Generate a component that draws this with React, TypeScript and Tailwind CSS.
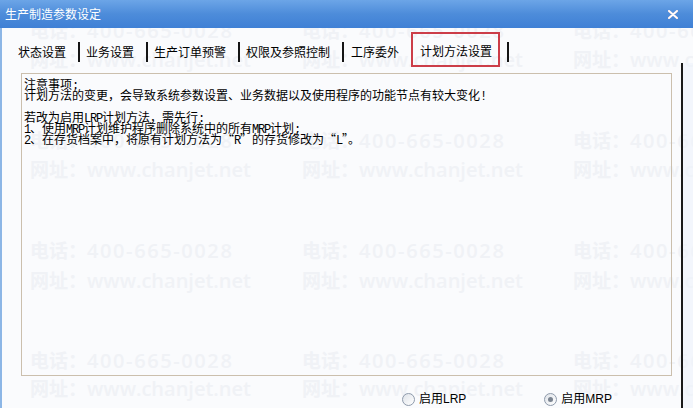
import React from "react";

const CJK = '"Noto Sans CJK SC", "Noto Sans", sans-serif';

function Mixed({ text }: { text: string }) {
  const parts = text.match(/[\x20-\x7e]+|[^\x20-\x7e]+/g) || [];
  return (
    <>
      {parts.map((p, i) =>
        /^[\x20-\x7e]+$/.test(p) ? (
          <span
            key={i}
            className="text-[12px] leading-[11px] tracking-[-1.2px]"
            style={{ fontFamily: '"Liberation Mono", monospace' }}
          >
            {p}
          </span>
        ) : (
          <span key={i}>{p}</span>
        )
      )}
    </>
  );
}

function Watermark() {
  const cols = [30, 302, 573];
  const tel = [31, 141, 251, 361];
  const web = [60, 170, 281, 389];
  const items: React.ReactNode[] = [];
  cols.forEach((x) => {
    tel.forEach((y) => {
      items.push(
        <div
          key={`t${x}-${y}`}
          className="absolute whitespace-nowrap text-[20px] leading-[28px] font-semibold text-[#f0f2f6]"
          style={{ left: x, top: y - 14, fontFamily: '"Open Sans", "Noto Sans CJK SC", sans-serif' }}
        >
          <span className="text-[19px]">电话：</span>
          <span className="tracking-[1.6px]">400-665-0028</span>
        </div>
      );
    });
    web.forEach((y) => {
      items.push(
        <div
          key={`w${x}-${y}`}
          className="absolute whitespace-nowrap text-[20px] leading-[28px] font-semibold text-[#f0f2f6]"
          style={{ left: x, top: y - 14, fontFamily: '"Open Sans", "Noto Sans CJK SC", sans-serif' }}
        >
          <span className="text-[19px]">网址：</span>
          <span>www.chanjet.net</span>
        </div>
      );
    });
  });
  return <div className="absolute inset-0 pointer-events-none">{items}</div>;
}

function Bar({ ml }: { ml: string }) {
  return <div className={`w-[2px] h-[20px] mt-[14px] bg-[#151515] ${ml}`} />;
}

function Tab({ label, ml }: { label: string; ml: string }) {
  return (
    <div className={`mt-[14px] h-[20px] leading-[20px] text-[12px] text-black whitespace-nowrap ${ml}`}>
      {label}
    </div>
  );
}

function Radio({ checked, label }: { checked?: boolean; label: string }) {
  return (
    <div className="flex items-center h-[14px]">
      <div className="w-[13px] h-[13px] rounded-full border border-[#8e9aab] bg-gradient-to-br from-[#dfe3e9] to-[#ffffff] flex items-center justify-center">
        {checked && <div className="w-[5px] h-[5px] rounded-full bg-[#7a8390]" />}
      </div>
      <span
        className="ml-[4px] text-[12px] leading-[14px] text-black whitespace-nowrap"
        style={{ fontFamily: '"Liberation Sans", "Noto Sans CJK SC", sans-serif' }}
      >
        {label}
      </span>
    </div>
  );
}

export default function App() {
  const lines = [
    "注意事项:",
    "计划方法的变更，会导致系统参数设置、业务数据以及使用程序的功能节点有较大变化!",
    "",
    "若改为启用LRP计划方法，需先行:",
    "1、使用MRP计划维护程序删除系统中的所有MRP计划;",
    "2、在存货档案中，将原有计划方法为“R”的存货修改为“L”。",
  ];
  return (
    <div
      className="relative w-[693px] h-[408px] overflow-hidden bg-[#fafbfd] flex flex-col"
      style={{ fontFamily: CJK }}
    >
      <Watermark />
      {/* Title bar */}
      <div className="relative h-[28px] shrink-0 flex items-center justify-between bg-gradient-to-b from-[#6ca5e7] via-[#4d8cda] to-[#3f80d5] pl-[5px] pr-[15px]">
        <span className="text-[12px] text-white leading-[14px]">生产制造参数设定</span>
        <svg width="10" height="9" viewBox="0 0 10 9">
          <path d="M1 1 L9 8 M9 1 L1 8" stroke="#f6dede" strokeWidth="2.2" strokeLinecap="round" />
          <path d="M1 1 L9 8 M9 1 L1 8" stroke="#ffffff" strokeWidth="1.2" strokeLinecap="round" />
        </svg>
      </div>
      {/* Body */}
      <div className="relative flex-1 flex flex-row">
        <div className="w-[2px] bg-[#8cb6e6]" />
        <div className="flex-1 flex flex-col">
          {/* Tabs */}
          <div className="h-[40px] flex flex-row items-start pl-[16px]">
            <Tab label="状态设置" ml="" />
            <Bar ml="ml-[12px]" />
            <Tab label="业务设置" ml="ml-[6px]" />
            <Bar ml="ml-[12px]" />
            <Tab label="生产订单预警" ml="ml-[6px]" />
            <Bar ml="ml-[12px]" />
            <Tab label="权限及参照控制" ml="ml-[6px]" />
            <Bar ml="ml-[12px]" />
            <Tab label="工序委外" ml="ml-[7px]" />
            <div className="ml-[12px] mt-[4px] h-[35px] border-2 border-[#cc3d48] flex items-center pl-[7px] pr-[6px] pt-[2px]">
              <span className="text-[12px] leading-[20px] text-black whitespace-nowrap">计划方法设置</span>
            </div>
            <Bar ml="ml-[7px]" />
          </div>
          {/* Panel */}
          <div className="ml-[19px] mr-[9px] mt-[5px] h-[303px] border border-[#cbbfad] pl-[2px] pt-[4px]">
            {lines.map((l, i) => (
              <div key={i} className="h-[11px] leading-[11px] text-[12px] text-black whitespace-nowrap">
                <Mixed text={l} />
              </div>
            ))}
          </div>
          {/* Radios */}
          <div className="mt-[16px] flex flex-row ml-[400px] gap-[78px]">
            <Radio label="启用LRP" />
            <Radio checked label="启用MRP" />
          </div>
        </div>
        <div className="w-[12px] flex flex-col">
          <div className="h-[35px]" />
          <div className="flex-1 border-l-2 border-[#1a1a1a] bg-[#eef3fb]/60" />
        </div>
      </div>
    </div>
  );
}
